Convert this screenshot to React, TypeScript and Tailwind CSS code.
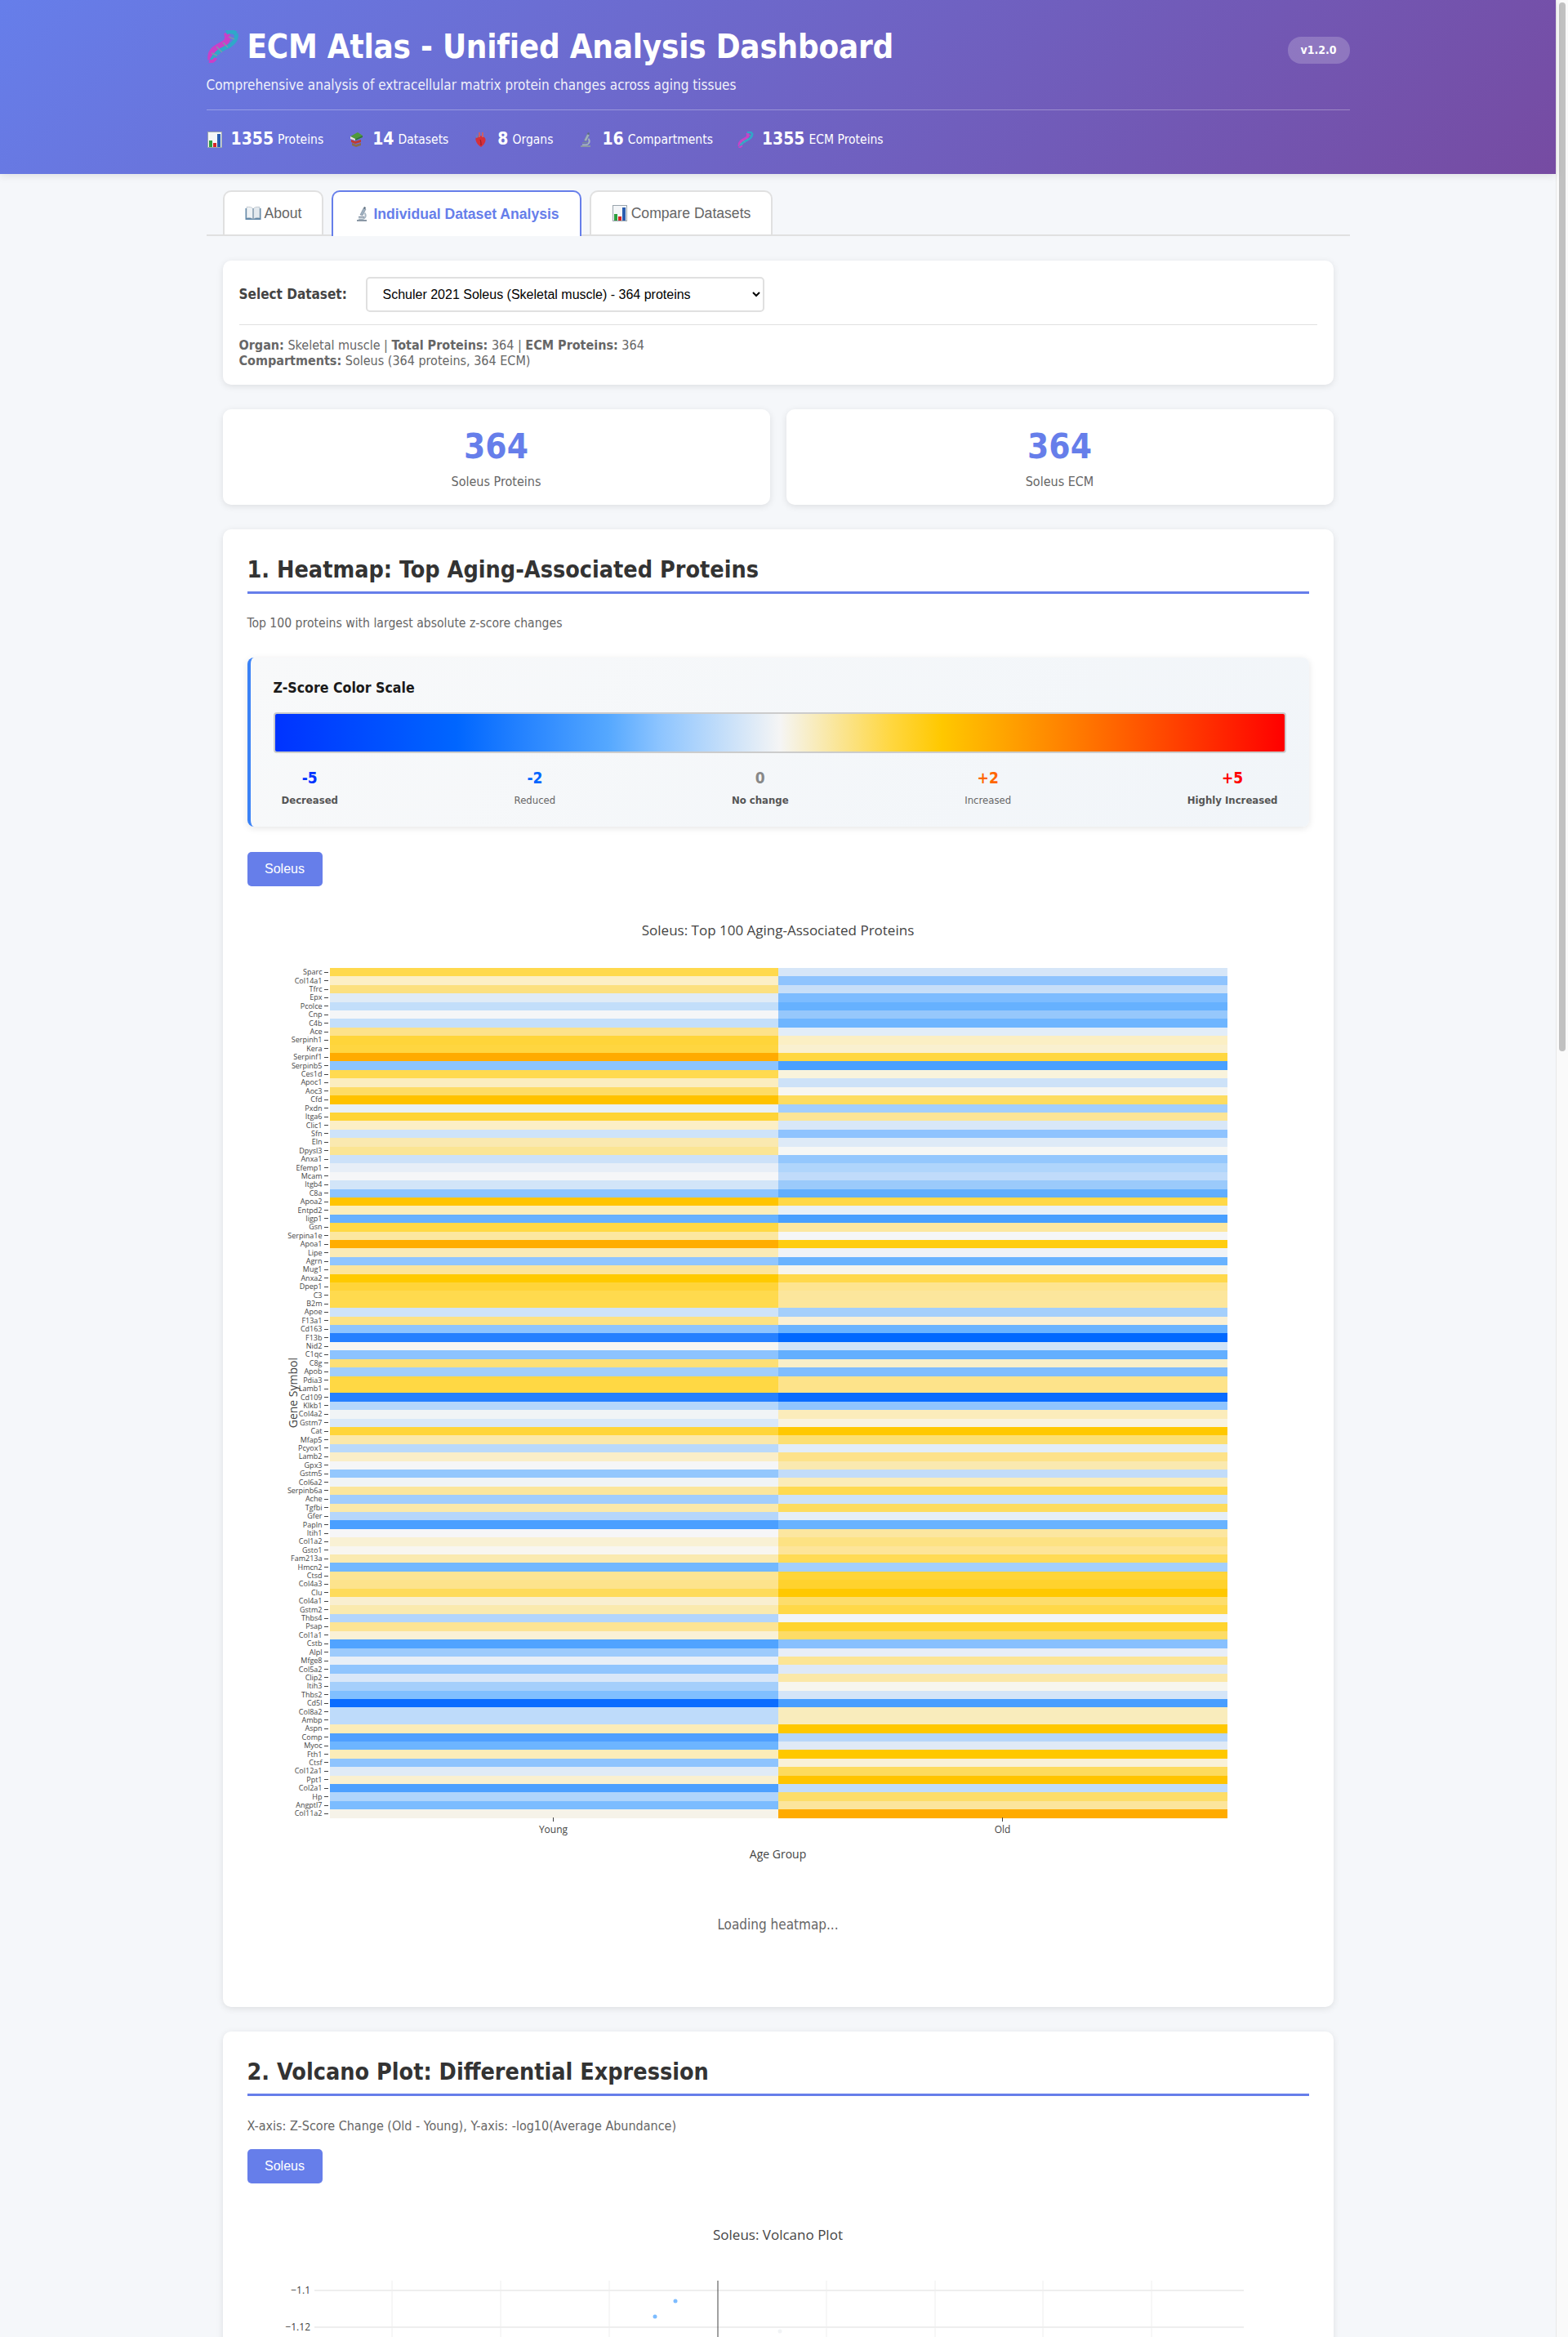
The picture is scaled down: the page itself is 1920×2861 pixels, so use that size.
import React from "react";

const heatRows: [string, string, string][] = [
  ["Sparc", "#ffd94d", "#d6e6f8"], ["Col14a1", "#fcefc6", "#8fc4fe"], ["Tfrc", "#fce07f", "#c8dff8"], ["Epx", "#e0ebf6", "#7dbcff"],
  ["Pcolce", "#c2defa", "#66b1ff"], ["Cnp", "#f5f6f7", "#96c8fc"], ["C4b", "#c4dffa", "#6eb5ff"], ["Ace", "#fde28a", "#e2edf8"],
  ["Serpinh1", "#ffd53a", "#fbefc4"], ["Kera", "#ffd640", "#f9f0d0"], ["Serpinf1", "#ffab00", "#ffd740"], ["Serpinb5", "#8cc4ff", "#4aa0ff"],
  ["Ces1d", "#ffda50", "#f9f3dc"], ["Apoc1", "#fbedbf", "#cde2f8"], ["Aoc3", "#fddc66", "#f7f6f0"], ["Cfd", "#ffc200", "#fddc60"],
  ["Pxdn", "#e9f0f7", "#a3cefc"], ["Itga6", "#ffd436", "#fce596"], ["Clic1", "#fcefc6", "#d8e7f8"], ["Sfn", "#cee3f9", "#8fc3fe"],
  ["Eln", "#fae9b0", "#deeaf7"], ["Dpysl3", "#fbe594", "#f6f7f5"], ["Anxa1", "#cce1f9", "#94c7fd"], ["Efemp1", "#e7eef7", "#b0d5fb"],
  ["Mcam", "#f5f6f8", "#c0dbfa"], ["Itgb4", "#d2e5f8", "#9bcafb"], ["C8a", "#8cc4ff", "#61aeff"], ["Apoa2", "#ffc400", "#ffd848"],
  ["Entpd2", "#fbeebb", "#e9f0f7"], ["Iigp1", "#66b1ff", "#489fff"], ["Gsn", "#ffd844", "#fce7a0"], ["Serpina1e", "#fce7a0", "#f5f6f7"],
  ["Apoa1", "#ffad00", "#ffcd10"], ["Lipe", "#fbebb5", "#f0f3f7"], ["Agrn", "#90c6ff", "#69b3ff"], ["Mug1", "#fce59c", "#f7f5ec"],
  ["Anxa2", "#ffca00", "#ffd84a"], ["Dpep1", "#ffd43a", "#fde490"], ["C3", "#ffda4e", "#fce69c"], ["B2m", "#ffda4e", "#fce69c"],
  ["Apoe", "#cee3f9", "#a4cffb"], ["F13a1", "#fde283", "#f9f0d4"], ["Cd163", "#8fc4fe", "#69b3ff"], ["F13b", "#2680ff", "#0068ff"],
  ["Nid2", "#f7f6f2", "#cfe3f8"], ["C1qc", "#8cc3ff", "#63afff"], ["C8g", "#fddf76", "#f9efc8"], ["Apob", "#a1cefc", "#7fbdff"],
  ["Pdia3", "#ffd844", "#fde38a"], ["Lamb1", "#ffd844", "#fde38a"], ["Cd109", "#2680ff", "#0a6cff"], ["Klkb1", "#b5d7fb", "#90c5fe"],
  ["Col4a2", "#f1f4f6", "#fbecbb"], ["Gstm7", "#d9e8f8", "#f9f3df"], ["Cat", "#ffd53a", "#ffc800"], ["Mfap5", "#fbe8aa", "#fcdf72"],
  ["Pcyox1", "#bad9fa", "#e3edf7"], ["Lamb2", "#faeec8", "#fde28a"], ["Gpx3", "#f5f6f7", "#fae9b0"], ["Gstm5", "#93c7fd", "#c2dcf9"],
  ["Col6a2", "#f0f4f6", "#fbecb8"], ["Serpinb6a", "#fbe69c", "#ffda50"], ["Ache", "#a1cdfc", "#cde2f8"], ["Tgfbi", "#fae9aa", "#fddc60"],
  ["Gfer", "#b5d6fb", "#e5eef7"], ["Papln", "#4a9fff", "#69b3ff"], ["Itih1", "#f6f6f8", "#fce6a0"], ["Col1a2", "#f9f1d4", "#fde283"],
  ["Gsto1", "#f8f6f0", "#fde59a"], ["Fam213a", "#faeab0", "#ffdb55"], ["Hmcn2", "#72b8ff", "#a4cffb"], ["Ctsd", "#fce594", "#ffd53a"],
  ["Col4a3", "#fde38c", "#ffd22e"], ["Clu", "#fedb5a", "#ffc800"], ["Col4a1", "#f9efd0", "#fddd6c"], ["Gstm2", "#faeaae", "#ffd848"],
  ["Thbs4", "#b3d5fb", "#f2f5f8"], ["Psap", "#fce494", "#ffd42e"], ["Col1a1", "#f9f1d6", "#fddc66"], ["Cstb", "#50a3ff", "#88c0fe"],
  ["Alpl", "#9dcbfc", "#e8eef7"], ["Mfge8", "#e8eff7", "#fce594"], ["Col5a2", "#90c5fe", "#dee9f7"], ["Clip2", "#d9e7f8", "#fbe8a8"],
  ["Itih3", "#a5cffb", "#f7f6ee"], ["Thbs2", "#80bfff", "#d4e5f8"], ["Cd5l", "#0a6cff", "#489eff"], ["Col8a2", "#bedbfa", "#f9ecbc"],
  ["Ambp", "#bedbfa", "#f9ecbc"], ["Aspn", "#fbecb8", "#ffc800"], ["Comp", "#4f9fff", "#b6d6fa"], ["Myoc", "#6db5ff", "#e0eaf6"],
  ["Fth1", "#fbecb8", "#ffc800"], ["Ctsf", "#8ec4fe", "#f9f1d8"], ["Col12a1", "#e0ebf6", "#fddb5e"], ["Ppt1", "#f9f0d0", "#ffc400"],
  ["Col2a1", "#4da0ff", "#c2dcf9"], ["Hp", "#b0d4fb", "#fddd68"], ["Angptl7", "#7cbcff", "#fce59c"], ["Col11a2", "#f6f3e9", "#ffab00"],
];

const Dna = ({ size }: { size: number }) => (
  <svg width={size} height={size} viewBox="0 0 40 40" className="shrink-0">
    <path d="M5 36C3 25 12 21 20 17c6-3 7-8 4-14" fill="none" stroke="#c940c8" strokeWidth="7" />
    <path d="M36 4c2 9-5 14-14 18-7 3-12 7-16 15" fill="none" stroke="#2fa8c9" strokeWidth="5" />
    <path d="M12 20l7 7M20 15l6 6M27 8l7 3M6 28l7 3" stroke="#7f93ad" strokeWidth="1.500" />
    <path d="M24 3c4-2 8-2 12 1" fill="none" stroke="#2fa8c9" strokeWidth="5" />
    <path d="M3 38c4 1 7-1 8-4" fill="none" stroke="#c940c8" strokeWidth="4" />
  </svg>
);

const Bars = ({ size }: { size: number }) => (
  <svg width={size} height={size} viewBox="0 0 20 20" className="shrink-0">
    <rect x="1.500" y="0.500" width="17" height="19" fill="#f4f6f8" stroke="#9aa5ad" />
    <rect x="3" y="11" width="4" height="8" fill="#2e9e3f" />
    <rect x="8" y="14" width="4" height="5" fill="#d42626" />
    <rect x="13" y="3" width="4" height="16" fill="#2a5db0" />
  </svg>
);

const Books = ({ size }: { size: number }) => (
  <svg width={size} height={size} viewBox="0 0 20 20" className="shrink-0">
    <path d="M3 6l9-5 6 4-9 4z" fill="#4f9a3a" />
    <path d="M3 6l6 3v2l-6-2z" fill="#e8e4d8" />
    <path d="M4 10l5 2 7-2v3l-7 2-5-2z" fill="#c23a30" />
    <path d="M5 14l5 2 6-2v3l-6 2-5-2z" fill="#8a6d4a" />
    <path d="M9 9l9-4v2l-9 4z" fill="#2f7a2c" />
  </svg>
);

const Heart = ({ size }: { size: number }) => (
  <svg width={size} height={size} viewBox="0 0 20 20" className="shrink-0">
    <path d="M4 7c3-3 9-2 11 1 2 4-2 9-5 11C5 16 2 10 4 7z" fill="#d5303a" />
    <path d="M7 1h2v6H7zM11 1h2v6h-2z" fill="#c9606a" />
    <path d="M4 3l3 4-3 1z" fill="#6f7fb5" />
    <path d="M9 10c1 2 1 4 1 7" stroke="#8c1620" fill="none" />
  </svg>
);

const Scope = ({ size }: { size: number }) => (
  <svg width={size} height={size} viewBox="0 0 20 20" className="shrink-0">
    <path d="M4 19h12v-2H4z" fill="#8b98a6" />
    <path d="M12 3l3 1-4 8-3-1z" fill="#9fb0bf" stroke="#66778a" strokeWidth="0.5" />
    <path d="M13 1l2 1-1 2-2-1z" fill="#5d6d7d" />
    <path d="M14 8c3 3 2 8-3 9H6v-1.500h5c3-1 3-4 2-6z" fill="#a8b6c2" />
    <path d="M6 13h7v1.500H6z" fill="#77889a" />
  </svg>
);

const OpenBook = ({ size }: { size: number }) => (
  <svg width={size} height={size} viewBox="0 0 20 20" className="shrink-0">
    <path d="M0.5 4h19v14h-19z" fill="#5f86a8" />
    <path d="M2 2.500c3-0.500 6 0 7.500 1.500V17c-2-1.500-5-1.500-7.500-1z" fill="#eef2f5" stroke="#97a5b0" strokeWidth="0.5" />
    <path d="M18 2.500c-3-0.500-6 0-7.500 1.500V17c2-1.500 5-1.500 7.500-1z" fill="#e3e9ee" stroke="#97a5b0" strokeWidth="0.5" />
  </svg>
);

const HeaderStat = ({ icon, value, label }: { icon: React.ReactNode; value: string; label: string }) => (
  <div className="flex items-center">
    <span className="mr-[10px] flex">{icon}</span>
    <span className="mr-[5px] text-[21px] leading-[27px] font-bold">{value}</span>
    <span className="pt-[2px] text-[15.5px] leading-[27px]">{label}</span>
  </div>
);

const Tab = ({ active, children }: { active?: boolean; children: React.ReactNode }) => (
  <button
    type="button"
    className={
      active
        ? "relative top-[2px] flex h-[56px] items-center gap-[4px] rounded-t-[10px] border-2 border-b-0 border-[#667eea] bg-white px-[25px] font-['Liberation_Sans',sans-serif] text-[17.6px] font-bold text-[#667eea]"
        : "flex h-[54px] items-center gap-[4px] rounded-t-[10px] border-2 border-b-0 border-[#e0e0e0] bg-white px-[25px] font-['Liberation_Sans',sans-serif] text-[17.6px] text-[#666]"
    }
  >
    {children}
  </button>
);

const ScaleStop = ({ value, color, label, strong }: { value: string; color: string; label: string; strong?: boolean }) => (
  <div className="flex flex-col items-center">
    <span className="text-[19px] leading-[25px] font-bold" style={{ color }}>{value}</span>
    <span className={strong ? "mt-[7px] text-[13px] leading-[16px] font-bold text-[#555]" : "mt-[7px] text-[13px] leading-[16px] text-[#666]"}>{label}</span>
  </div>
);

const SectionTitle = ({ children }: { children: React.ReactNode }) => (
  <h2 className="border-b-[3px] border-[#667eea] pt-px pb-[7px] text-[28.5px] leading-[38px] font-bold text-[#333]">{children}</h2>
);

const SoleusButton = () => (
  <button type="button" className="flex h-[42px] w-[92px] items-center justify-center rounded-[5px] bg-[#667eea] font-['Liberation_Sans',sans-serif] text-[16px] text-white">
    Soleus
  </button>
);

const Heatmap = () => (
  <div className="font-['Open_Sans',sans-serif] text-[#444]">
    <p className="text-center text-[17px] leading-[22px]">Soleus: Top 100 Aging-Associated Proteins</p>
    <div className="mt-[35px] flex pl-[49px]">
      <div className="flex w-[14px] items-center justify-center">
        <span className="rotate-180 text-[14px] leading-[14px] whitespace-nowrap [writing-mode:vertical-rl]">Gene Symbol</span>
      </div>
      <div className="flex h-[1040px] flex-col">
        {heatRows.map(([gene, young, old]) => (
          <div key={gene} className="flex min-h-0 flex-1 items-center">
            <span className="flex w-[29px] justify-end text-[9px] leading-[10px] whitespace-nowrap">{gene}</span>
            <span className="mx-[2px] h-px w-[5px] shrink-0 bg-[#444]" />
            <span className="h-full w-[549px]" style={{ background: young }} />
            <span className="h-full w-[550px]" style={{ background: old }} />
          </div>
        ))}
      </div>
    </div>
    <div className="ml-[100px] flex w-[1100px]">
      <div className="flex flex-1 flex-col items-center">
        <span className="h-[5px] w-px bg-[#444]" />
        <span className="mt-[2px] text-[12px] leading-[16px]">Young</span>
      </div>
      <div className="flex flex-1 flex-col items-center">
        <span className="h-[5px] w-px bg-[#444]" />
        <span className="mt-[2px] text-[12px] leading-[16px]">Old</span>
      </div>
    </div>
    <p className="mt-[13px] ml-[100px] w-[1100px] text-center text-[14px] leading-[18px]">Age Group</p>
  </div>
);

const VolcanoPlot = () => (
  <svg width="1300" height="124" viewBox="0 0 1300 124" className="block">
    <g stroke="#eeeeee" strokeWidth="1">
      {[177, 310, 443, 709, 842, 974, 1107].map((x) => (
        <line key={x} x1={x} y1="0" x2={x} y2="124" />
      ))}
      <line x1="82" y1="12" x2="1220" y2="12" strokeWidth="2" />
      <line x1="82" y1="57" x2="1220" y2="57" strokeWidth="2" />
    </g>
    <line x1="576" y1="0" x2="576" y2="124" stroke="#444" strokeWidth="1" />
    <circle cx="524" cy="25" r="2.500" fill="#7dbcff" />
    <circle cx="499" cy="44" r="2.500" fill="#7dbcff" />
    <circle cx="652" cy="62" r="2.500" fill="#f1f3f5" />
    <g fill="#444" fontSize="12" fontFamily="Open Sans, sans-serif" textAnchor="end">
      <text x="77" y="16">−1.1</text>
      <text x="77" y="61">−1.12</text>
    </g>
  </svg>
);

export default function App() {
  return (
    <div className="flex h-[2861px] overflow-hidden bg-[#f5f7fa] font-['DejaVu_Sans_Condensed','DejaVu_Sans',sans-serif]">
      <div className="min-w-0 flex-1">
        <header className="relative z-10 h-[213px] bg-[linear-gradient(135deg,#667eea_0%,#764ba2_100%)] text-white shadow-[0_2px_10px_rgba(0,0,0,0.1)]">
          <div className="mx-auto w-[1400px] pt-[30px]">
            <div className="flex items-center justify-between">
              <h1 className="flex items-center gap-[10px] text-[40px] leading-[54px] font-bold tracking-[-0.25px]">
                <Dna size={40} />
                ECM Atlas - Unified Analysis Dashboard
              </h1>
              <span className="mt-[8px] flex h-[33px] w-[76px] items-center justify-center rounded-[16px] bg-white/20 text-[14px] font-bold">v1.2.0</span>
            </div>
            <p className="mt-[9px] text-[17px] leading-[22px] opacity-90">Comprehensive analysis of extracellular matrix protein changes across aging tissues</p>
            <div className="mt-[19px] flex gap-[30px] border-t border-white/30 pt-[21px]">
              <HeaderStat icon={<Bars size={20} />} value="1355" label="Proteins" />
              <HeaderStat icon={<Books size={20} />} value="14" label="Datasets" />
              <HeaderStat icon={<Heart size={20} />} value="8" label="Organs" />
              <HeaderStat icon={<Scope size={20} />} value="16" label="Compartments" />
              <HeaderStat icon={<Dna size={20} />} value="1355" label="ECM Proteins" />
            </div>
          </div>
        </header>

        <main className="mx-auto w-[1400px]">
          <nav className="mt-[20px] flex h-[56px] items-end gap-[10px] border-b-2 border-[#e0e0e0] pl-[20px]">
            <Tab><OpenBook size={20} /> About</Tab>
            <Tab active><Scope size={20} /> Individual Dataset Analysis</Tab>
            <Tab><Bars size={20} /> Compare Datasets</Tab>
          </nav>

          <div className="px-[20px]">
            <section className="mt-[30px] rounded-[10px] bg-white p-[20px] shadow-[0_2px_8px_rgba(0,0,0,0.1)]">
              <div className="flex items-center gap-[20px] border-b border-[#e0e0e0] pb-[15px]">
                <label className="w-[135px] text-[17px] font-bold whitespace-nowrap text-[#444]">Select Dataset:</label>
                <select className="h-[43px] w-[488px] rounded-[5px] border-2 border-[#e0e0e0] bg-white px-[15px] font-['Liberation_Sans',sans-serif] text-[16px] text-black" defaultValue="soleus">
                  <option value="soleus">Schuler 2021 Soleus (Skeletal muscle) - 364 proteins</option>
                </select>
              </div>
              <div className="mt-[15px] text-[16px] leading-[19px] text-[#666]">
                <p><strong>Organ:</strong> Skeletal muscle | <strong>Total Proteins:</strong> 364 | <strong>ECM Proteins:</strong> 364</p>
                <p><strong>Compartments:</strong> Soleus (364 proteins, 364 ECM)</p>
              </div>
            </section>

            <div className="mt-[30px] grid h-[117px] grid-cols-2 gap-[20px]">
              {["Soleus Proteins", "Soleus ECM"].map((label) => (
                <div key={label} className="flex flex-col items-center rounded-[10px] bg-white pt-[19px] shadow-[0_2px_8px_rgba(0,0,0,0.1)]">
                  <span className="text-[42px] leading-[54px] font-bold text-[#667eea]">364</span>
                  <span className="mt-[6px] text-[16px] leading-[19px] text-[#666]">{label}</span>
                </div>
              ))}
            </div>

            <section className="mt-[30px] h-[1809px] rounded-[10px] bg-white p-[30px] shadow-[0_2px_8px_rgba(0,0,0,0.1)]">
              <SectionTitle>1. Heatmap: Top Aging-Associated Proteins</SectionTitle>
              <p className="mt-[27px] text-[15.6px] leading-[19px] text-[#666]">Top 100 proteins with largest absolute z-score changes</p>
              <div className="mt-[32px] h-[207px] rounded-[8px] border-l-4 border-[#3b82f6] bg-[linear-gradient(135deg,#f8f9fa,#f1f5f9)] px-[28px] pt-[26px] shadow-[0_2px_8px_rgba(0,0,0,0.1)]">
                <p className="text-[17.6px] leading-[22px] font-bold text-[#1a1a1a]">Z-Score Color Scale</p>
                <div className="mt-[19px] h-[50px] rounded-[4px] border-2 border-[#ccc] bg-[linear-gradient(to_right,#0033ff_0%,#0066ff_18%,#55a8ff_33%,#8cc4ff_38%,#f5f5f5_50%,#ffd740_61%,#ffc800_66%,#ff6600_83%,#ff0000_100%)]" />
                <div className="mt-[18px] flex justify-between px-[10px]">
                  <ScaleStop value="-5" color="#0033ff" label="Decreased" strong />
                  <ScaleStop value="-2" color="#0066ff" label="Reduced" />
                  <ScaleStop value="0" color="#888888" label="No change" strong />
                  <ScaleStop value="+2" color="#ff6600" label="Increased" />
                  <ScaleStop value="+5" color="#ff0000" label="Highly Increased" strong />
                </div>
              </div>
              <div className="mt-[31px]"><SoleusButton /></div>
              <div className="mt-[43px]"><Heatmap /></div>
              <p className="mt-[66px] text-center text-[17px] leading-[22px] text-[#666]">Loading heatmap...</p>
            </section>

            <section className="mt-[30px] rounded-[10px] bg-white p-[30px] shadow-[0_2px_8px_rgba(0,0,0,0.1)]">
              <SectionTitle>2. Volcano Plot: Differential Expression</SectionTitle>
              <p className="mt-[27px] text-[16px] leading-[19px] text-[#666]">X-axis: Z-Score Change (Old - Young), Y-axis: -log10(Average Abundance)</p>
              <div className="mt-[19px]"><SoleusButton /></div>
              <p className="mt-[52px] text-center font-['Open_Sans',sans-serif] text-[17px] leading-[22px] text-[#444]">Soleus: Volcano Plot</p>
              <div className="mt-[45px]"><VolcanoPlot /></div>
            </section>
          </div>
        </main>
      </div>
      <aside className="w-[15px] shrink-0 border-l border-[#e8e8e8] bg-[#fafafa] pt-[3px] pl-[3px]">
        <div className="h-[1284px] w-[8px] rounded-full bg-[#c1c1c1]" />
      </aside>
    </div>
  );
}
